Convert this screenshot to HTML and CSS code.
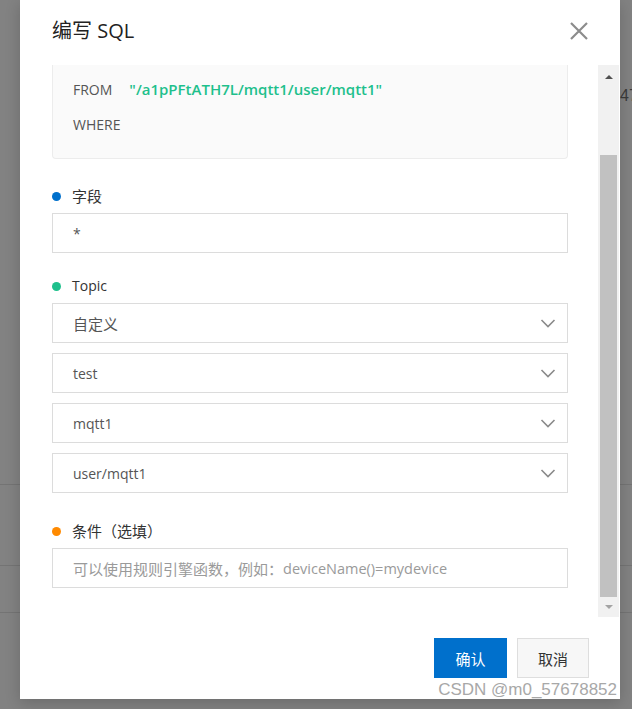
FILE: index.html
```html
<!DOCTYPE html>
<html lang="zh-CN">
<head>
<meta charset="utf-8">
<title>编写 SQL</title>
<link rel="stylesheet" href="styles.css">
</head>
<body>
<div class="page">
  <div class="strip strip-left"></div>
  <div class="dialog">
    <div class="dialog-header">
      <h2 class="dialog-title">编写 SQL</h2>
      <svg class="close-icon" width="18" height="18" viewBox="0 0 18 18"><path d="M1 1 L17 17 M17 1 L1 17" stroke="#8c8c8c" stroke-width="2.2" fill="none"/></svg>
    </div>
    <div class="dialog-body">
      <div class="content">
        <div class="code-box">
          <div class="code-line">FROM<span class="code-str">"/a1pPFtATH7L/mqtt1/user/mqtt1"</span></div>
          <div class="code-line">WHERE</div>
        </div>

        <div class="group group-field">
          <div class="label"><span class="dot dot-blue"></span><span class="zh">字段</span></div>
          <div class="input">*</div>
        </div>

        <div class="group group-topic">
          <div class="label"><span class="dot dot-green"></span>Topic</div>
          <div class="select-list">
            <div class="input select"><span class="zh">自定义</span><svg class="chev" width="16" height="9" viewBox="0 0 16 9"><path d="M1.5 1 L8 7.5 L14.5 1" stroke="#8a8a8a" stroke-width="1.6" fill="none"/></svg></div>
            <div class="input select"><span>test</span><svg class="chev" width="16" height="9" viewBox="0 0 16 9"><path d="M1.5 1 L8 7.5 L14.5 1" stroke="#8a8a8a" stroke-width="1.6" fill="none"/></svg></div>
            <div class="input select"><span>mqtt1</span><svg class="chev" width="16" height="9" viewBox="0 0 16 9"><path d="M1.5 1 L8 7.5 L14.5 1" stroke="#8a8a8a" stroke-width="1.6" fill="none"/></svg></div>
            <div class="input select"><span>user/mqtt1</span><svg class="chev" width="16" height="9" viewBox="0 0 16 9"><path d="M1.5 1 L8 7.5 L14.5 1" stroke="#8a8a8a" stroke-width="1.6" fill="none"/></svg></div>
          </div>
        </div>

        <div class="group group-cond">
          <div class="label"><span class="dot dot-orange"></span><span class="zh">条件（选填）</span></div>
          <div class="input placeholder"><span class="zh">可以使用规则引擎函数，例如：</span><span class="ph-latin">deviceName()=mydevice</span></div>
        </div>
      </div>
      <div class="scrollbar">
        <div class="sb-btn sb-up"><span class="tri-up"></span></div>
        <div class="sb-space"></div>
        <div class="sb-thumb"></div>
        <div class="sb-btn sb-down"><span class="tri-down"></span></div>
      </div>
    </div>
    <div class="dialog-footer">
      <button class="btn btn-primary">确认</button>
      <button class="btn btn-default">取消</button>
    </div>
    <div class="watermark">CSDN @m0_57678852</div>
  </div>
  <div class="strip strip-right"><span class="bg-num">47</span></div>
</div>
</body>
</html>
```

FILE: styles.css
```css
html, body {
  margin: 0;
  padding: 0;
}
body {
  width: 632px;
  height: 709px;
  overflow: hidden;
  background-color: #828282;
  background-image:
    linear-gradient(#747474, #747474),
    linear-gradient(#747474, #747474),
    linear-gradient(#747474, #747474);
  background-size: 100% 1px, 100% 1px, 100% 1px;
  background-position: 0 484px, 0 565px, 0 612px;
  background-repeat: no-repeat;
  font-family: "Open Sans", "Noto Sans CJK SC", sans-serif;
  color: #333;
}
.page {
  display: flex;
  align-items: flex-start;
  height: 709px;
}
.strip {
  flex: none;
}
.strip-left {
  width: 20px;
}
.strip-right {
  width: 12px;
  padding-top: 84px;
  overflow: hidden;
}
.bg-num {
  font-family: "Liberation Sans", sans-serif;
  font-size: 16px;
  color: #3a3a3a;
  white-space: nowrap;
}
.dialog {
  position: relative;
  flex: none;
  width: 600px;
  height: 699px;
  background: #fff;
  box-shadow: 0 4px 14px rgba(0, 0, 0, 0.18);
  display: flex;
  flex-direction: column;
}
.dialog-header {
  height: 62px;
  display: flex;
  align-items: center;
  justify-content: space-between;
  padding: 0 32px;
  flex: none;
}
.dialog-title {
  margin: 0;
  font-size: 20px;
  font-weight: normal;
  color: #222;
  line-height: 24px;
}
.close-icon {
  display: block;
  margin-top: -1px;
}
.dialog-body {
  margin-top: 3px;
  height: 552px;
  display: flex;
  flex: none;
  overflow: hidden;
}
.content {
  flex: 1;
  padding: 0 30px 0 32px;
  font-size: 14px;
}
.zh {
  font-size: 15px;
}
.code-box {
  background: #fafafa;
  border: 1px solid #ececec;
  border-top: none;
  border-radius: 0 0 4px 4px;
  padding: 7px 20px 16px;
  color: #555;
}
.code-line {
  line-height: 35px;
  height: 35px;
}
.code-str {
  color: #1ec08c;
  margin-left: 17px;
  font-size: 15px;
  font-weight: 600;
}
.group-field {
  margin-top: 27px;
}
.group-topic {
  margin-top: 23px;
}
.group-cond {
  margin-top: 28px;
}
.label {
  display: flex;
  align-items: center;
  height: 20px;
  line-height: 20px;
  color: #333;
}
.dot {
  width: 9px;
  height: 9px;
  border-radius: 50%;
  margin-right: 11px;
  flex: none;
}
.dot-blue { background: #0070cc; }
.dot-green { background: #1ec08c; }
.dot-orange { background: #ff8a00; }
.input {
  box-sizing: border-box;
  height: 40px;
  margin-top: 7px;
  border: 1px solid #dcdcdc;
  padding: 0 11px 0 20px;
  display: flex;
  align-items: center;
  color: #555;
}
.select-list {
  display: flex;
  flex-direction: column;
  gap: 10px;
  margin-top: 7px;
}
.select-list .input {
  margin-top: 0;
}
.select {
  justify-content: space-between;
}
.chev {
  display: block;
}
.placeholder {
  color: #9a9a9a;
}
.ph-latin {
  font-size: 14.5px;
}
.scrollbar {
  flex: none;
  width: 21px;
  margin-right: 1px;
  background: #f1f1f1;
  display: flex;
  flex-direction: column;
  align-items: center;
}
.sb-btn {
  display: flex;
  align-items: center;
  justify-content: center;
  width: 100%;
}
.sb-up {
  height: 24px;
}
.sb-space {
  height: 66px;
}
.sb-thumb {
  width: 17px;
  height: 442px;
  background: #c1c1c1;
}
.sb-down {
  height: 20px;
}
.tri-up {
  width: 0;
  height: 0;
  border-left: 4px solid transparent;
  border-right: 4px solid transparent;
  border-bottom: 4px solid #505050;
}
.tri-down {
  width: 0;
  height: 0;
  border-left: 4px solid transparent;
  border-right: 4px solid transparent;
  border-top: 4px solid #a3a3a3;
}
.dialog-footer {
  flex: none;
  display: flex;
  justify-content: flex-end;
  gap: 10px;
  padding: 21px 31px 21px 0;
}
.btn {
  box-sizing: border-box;
  height: 40px;
  width: 73px;
  font-family: "Open Sans", "Noto Sans CJK SC", sans-serif;
  font-size: 15px;
  border-radius: 0;
  cursor: pointer;
}
.btn-primary {
  background: #0070cc;
  border: none;
  color: #fff;
}
.btn-default {
  width: 72px;
  background: #f7f7f7;
  border: 1px solid #dedede;
  color: #333;
}
.watermark {
  position: absolute;
  right: 3px;
  bottom: -1px;
  font-family: "Liberation Sans", sans-serif;
  font-size: 17px;
  line-height: 20px;
  color: #a8a8a8;
  text-shadow: 0 0 1px #fff;
  white-space: nowrap;
}
```
